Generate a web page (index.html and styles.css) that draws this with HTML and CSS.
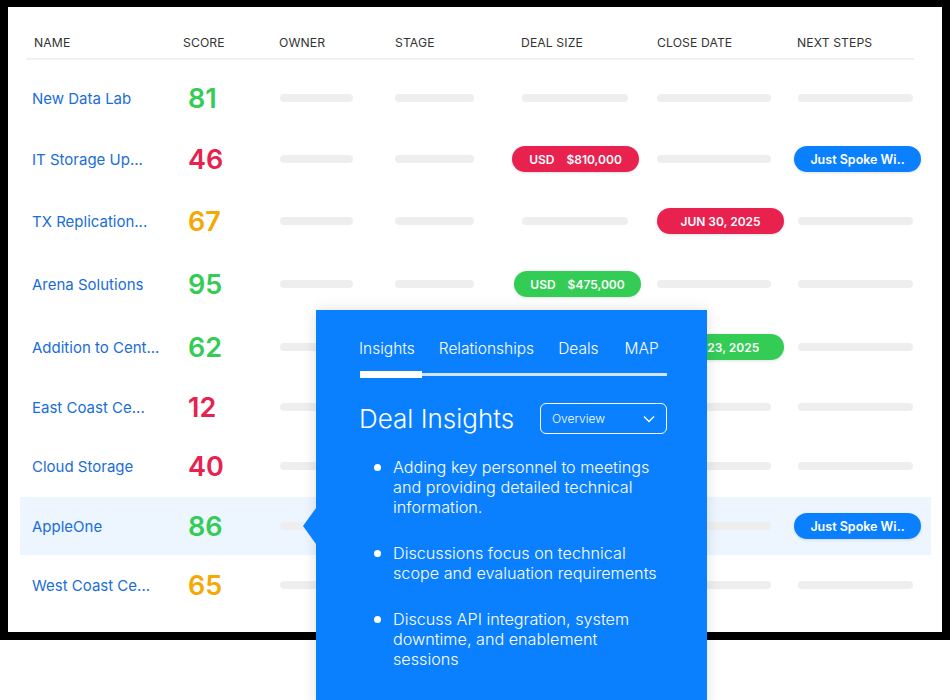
FILE: index.html
```html
<!DOCTYPE html>
<html>
<head>
<meta charset="utf-8">
<link rel="stylesheet" href="styles.css">
</head>
<body>
<div class="frame">
  <div class="card">
    <div class="row head">
      <div class="h h-name">NAME</div>
      <div class="h">SCORE</div>
      <div class="h">OWNER</div>
      <div class="h">STAGE</div>
      <div class="h h-deal">DEAL SIZE</div>
      <div class="h">CLOSE DATE</div>
      <div class="h h-next">NEXT STEPS</div>
    </div>
    <div class="head-line"></div>
    <div class="rows">
      <div class="row">
        <div class="name">New Data Lab</div>
        <div class="score green">81</div>
        <div><span class="bar owner"></span></div>
        <div><span class="bar stage"></span></div>
        <div><span class="bar deal"></span></div>
        <div><span class="bar close"></span></div>
        <div><span class="bar next"></span></div>
      </div>
      <div class="row">
        <div class="name">IT Storage Up...</div>
        <div class="score red">46</div>
        <div><span class="bar owner"></span></div>
        <div><span class="bar stage"></span></div>
        <div><span class="pill red-bg"><span>USD</span><span>$810,000</span></span></div>
        <div><span class="bar close"></span></div>
        <div><span class="pill blue-bg">Just Spoke Wi..</span></div>
      </div>
      <div class="row">
        <div class="name">TX Replication...</div>
        <div class="score orange">67</div>
        <div><span class="bar owner"></span></div>
        <div><span class="bar stage"></span></div>
        <div><span class="bar deal"></span></div>
        <div><span class="pill red-bg date">JUN 30, 2025</span></div>
        <div><span class="bar next"></span></div>
      </div>
      <div class="row">
        <div class="name">Arena Solutions</div>
        <div class="score green">95</div>
        <div><span class="bar owner"></span></div>
        <div><span class="bar stage"></span></div>
        <div><span class="pill green-bg shift"><span>USD</span><span>$475,000</span></span></div>
        <div><span class="bar close"></span></div>
        <div><span class="bar next"></span></div>
      </div>
      <div class="row">
        <div class="name">Addition to Cent...</div>
        <div class="score green">62</div>
        <div><span class="bar owner"></span></div>
        <div><span class="bar stage"></span></div>
        <div><span class="bar deal"></span></div>
        <div><span class="pill green-bg date">JUL 23, 2025</span></div>
        <div><span class="bar next"></span></div>
      </div>
      <div class="row">
        <div class="name">East Coast Ce...</div>
        <div class="score red">12</div>
        <div><span class="bar owner"></span></div>
        <div><span class="bar stage"></span></div>
        <div><span class="bar deal"></span></div>
        <div><span class="bar close"></span></div>
        <div><span class="bar next"></span></div>
      </div>
      <div class="row">
        <div class="name">Cloud Storage</div>
        <div class="score red">40</div>
        <div><span class="bar owner"></span></div>
        <div><span class="bar stage"></span></div>
        <div><span class="bar deal"></span></div>
        <div><span class="bar close"></span></div>
        <div><span class="bar next"></span></div>
      </div>
      <div class="row active">
        <div class="name">AppleOne</div>
        <div class="score green">86</div>
        <div><span class="bar owner"></span></div>
        <div><span class="bar stage"></span></div>
        <div><span class="bar deal"></span></div>
        <div><span class="bar close"></span></div>
        <div><span class="pill blue-bg">Just Spoke Wi..</span></div>
      </div>
      <div class="row">
        <div class="name">West Coast Ce...</div>
        <div class="score orange">65</div>
        <div><span class="bar owner"></span></div>
        <div><span class="bar stage"></span></div>
        <div><span class="bar deal"></span></div>
        <div><span class="bar close"></span></div>
        <div><span class="bar next"></span></div>
      </div>
    </div>
  </div>
</div>

<div class="popover">
  <div class="arrow"></div>
  <div class="tabs">
    <span class="tab">Insights</span>
    <span class="tab">Relationships</span>
    <span class="tab">Deals</span>
    <span class="tab">MAP</span>
  </div>
  <div class="track"><span class="ind"></span><span class="rest"></span></div>
  <div class="title-row">
    <div class="title">Deal Insights</div>
    <div class="select">
      <span>Overview</span>
      <svg width="12" height="8" viewBox="0 0 12 8"><path d="M1 1.5 L6 6.5 L11 1.5" fill="none" stroke="#fff" stroke-width="1.3"/></svg>
    </div>
  </div>
  <ul class="list">
    <li>Adding key personnel to meetings and providing detailed technical information.</li>
    <li>Discussions focus on technical scope and evaluation requirements</li>
    <li>Discuss API integration, system downtime, and enablement sessions</li>
  </ul>
</div>
</body>
</html>
```
FILE: styles.css
```css
* { box-sizing: border-box; }
html, body { margin: 0; padding: 0; }
body {
  width: 950px;
  height: 700px;
  overflow: hidden;
  background: #fff;
  font-family: Inter, "Noto Sans", sans-serif;
  position: relative;
}
.frame {
  background: #000;
  padding: 7px 8px 8px 8px;
  width: 950px;
  height: 640px;
}
.card {
  background: #fff;
  height: 625px;
  padding: 19px 11px 0 12px;
}
.row {
  display: grid;
  grid-template-columns: 151px 96px 116px 117px 145px 137px 1fr;
  align-items: center;
  padding-left: 12px;
  height: 58px;
  margin-bottom: 3px;
}
.rows .row:nth-child(2) { margin-bottom: 4px; }
.rows .row:nth-child(3),
.rows .row:nth-child(4) { margin-bottom: 5px; }
.rows .row:nth-child(5),
.rows .row:nth-child(7) { margin-bottom: 2px; }
.rows .row:nth-child(6),
.rows .row:nth-child(8) { margin-bottom: 1px; }
.row.head {
  height: 32px;
  margin: 0;
}
.h {
  font-size: 12.2px;
  color: #333;
  letter-spacing: 0.1px;
}
.h-name { padding-left: 2px; }
.h-deal { padding-left: 9px; }
.h-next { padding-left: 3px; }
.head-line {
  height: 2px;
  background: #f0f0f0;
  margin: 0 17px 0 6px;
}
.rows { margin-top: 9px; }
.row.active { background: #edf5ff; }
.name {
  color: #1a6dd8;
  font-size: 15px;
  white-space: nowrap;
}
.score {
  font-size: 27px;
  font-weight: 600;
  padding-left: 5px;
  line-height: 1;
}
.green { color: #33cc55; }
.red { color: #e8214f; }
.orange { color: #f7a800; }
.bar {
  display: block;
  height: 8px;
  border-radius: 4px;
  background: #eeeeee;
}
.bar.owner { width: 73px; margin-left: 1px; }
.bar.stage { width: 79px; }
.bar.deal { width: 106px; margin-left: 10px; }
.bar.close { width: 114px; }
.bar.next { width: 115px; margin-left: 4px; }
.pill {
  display: flex;
  align-items: center;
  justify-content: center;
  gap: 12px;
  width: 127px;
  height: 26px;
  border-radius: 13px;
  color: #fff;
  font-size: 12px;
  font-weight: 600;
  box-shadow: 0 1px 3px rgba(0,0,0,0.12);
}
.pill.shift { margin-left: 2px; }
.pill.date { font-size: 12px; }
.red-bg { background: #e8214f; }
.green-bg { background: #33cc55; }
.blue-bg { background: #0a80ff; font-size: 12.5px; }

.popover {
  position: absolute;
  left: 316px;
  top: 310px;
  width: 391px;
  height: 400px;
  background: #0a80ff;
  color: #fff;
  padding: 28px 40px 0 43px;
  box-shadow: 0 0 14px rgba(0,0,0,0.12);
}
.arrow {
  position: absolute;
  left: -13px;
  top: 198px;
  width: 0;
  height: 0;
  border-top: 18px solid transparent;
  border-bottom: 18px solid transparent;
  border-right: 13px solid #0a80ff;
}
.tabs {
  display: flex;
  gap: 24px;
  font-size: 15.5px;
  line-height: 22px;
  font-weight: 300;
}
.tab:nth-child(3) { margin-right: 2px; }
.track {
  display: flex;
  align-items: center;
  height: 7px;
  margin-top: 11px;
  margin-left: 1px;
  width: 307px;
}
.track .ind { width: 62px; height: 7px; background: #fff; }
.track .rest { flex: 1; height: 3px; background: #cfe5ff; }
.title-row {
  display: flex;
  justify-content: space-between;
  align-items: center;
  width: 308px;
  height: 31px;
  margin-top: 25px;
}
.title {
  font-size: 26px;
  font-weight: 300;
  line-height: 31px;
}
.select {
  width: 127px;
  height: 31px;
  border: 1px solid #fff;
  border-radius: 6px;
  display: flex;
  align-items: center;
  justify-content: space-between;
  padding: 0 11px 0 11px;
  font-size: 12px;
  font-weight: 300;
}
.list {
  list-style: none;
  margin: 23px 0 0 0;
  padding: 0;
  width: 303px;
}
.list li {
  display: flex;
  font-size: 16.2px;
  line-height: 20px;
  font-weight: 300;
  margin-bottom: 26px;
}
.list li::before {
  content: "";
  flex-shrink: 0;
  width: 7px;
  height: 7px;
  border-radius: 50%;
  background: #fff;
  margin: 7px 12px 0 15px;
}
```
